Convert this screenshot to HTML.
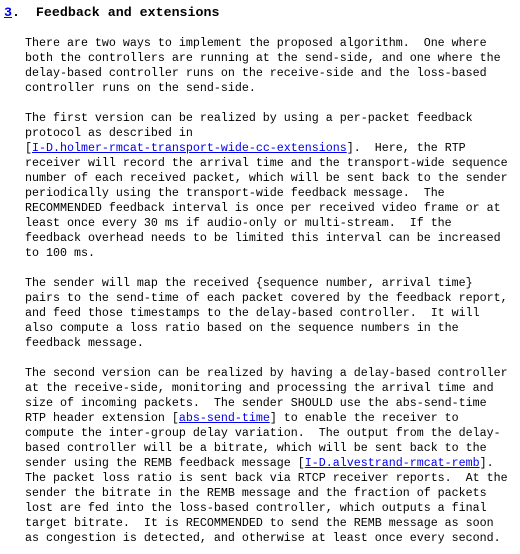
<!DOCTYPE html>
<html><head><meta charset="utf-8"><style>
html,body{margin:0;padding:0;background:#fff;width:520px;height:554px;overflow:hidden}
pre{margin:0;position:absolute;left:4px;top:5px;font-family:"Liberation Mono",monospace;font-size:11.67px;line-height:15px;color:#000}
a{color:#00e;text-decoration:underline}
.h{font-weight:bold;font-size:13.3px}
</style></head><body><pre><span class="h"><a>3</a>.  Feedback and extensions</span>

   There are two ways to implement the proposed algorithm.  One where
   both the controllers are running at the send-side, and one where the
   delay-based controller runs on the receive-side and the loss-based
   controller runs on the send-side.

   The first version can be realized by using a per-packet feedback
   protocol as described in
   [<a>I-D.holmer-rmcat-transport-wide-cc-extensions</a>].  Here, the RTP
   receiver will record the arrival time and the transport-wide sequence
   number of each received packet, which will be sent back to the sender
   periodically using the transport-wide feedback message.  The
   RECOMMENDED feedback interval is once per received video frame or at
   least once every 30 ms if audio-only or multi-stream.  If the
   feedback overhead needs to be limited this interval can be increased
   to 100 ms.

   The sender will map the received {sequence number, arrival time}
   pairs to the send-time of each packet covered by the feedback report,
   and feed those timestamps to the delay-based controller.  It will
   also compute a loss ratio based on the sequence numbers in the
   feedback message.

   The second version can be realized by having a delay-based controller
   at the receive-side, monitoring and processing the arrival time and
   size of incoming packets.  The sender SHOULD use the abs-send-time
   RTP header extension [<a>abs-send-time</a>] to enable the receiver to
   compute the inter-group delay variation.  The output from the delay-
   based controller will be a bitrate, which will be sent back to the
   sender using the REMB feedback message [<a>I-D.alvestrand-rmcat-remb</a>].
   The packet loss ratio is sent back via RTCP receiver reports.  At the
   sender the bitrate in the REMB message and the fraction of packets
   lost are fed into the loss-based controller, which outputs a final
   target bitrate.  It is RECOMMENDED to send the REMB message as soon
   as congestion is detected, and otherwise at least once every second.
</pre></body></html>
